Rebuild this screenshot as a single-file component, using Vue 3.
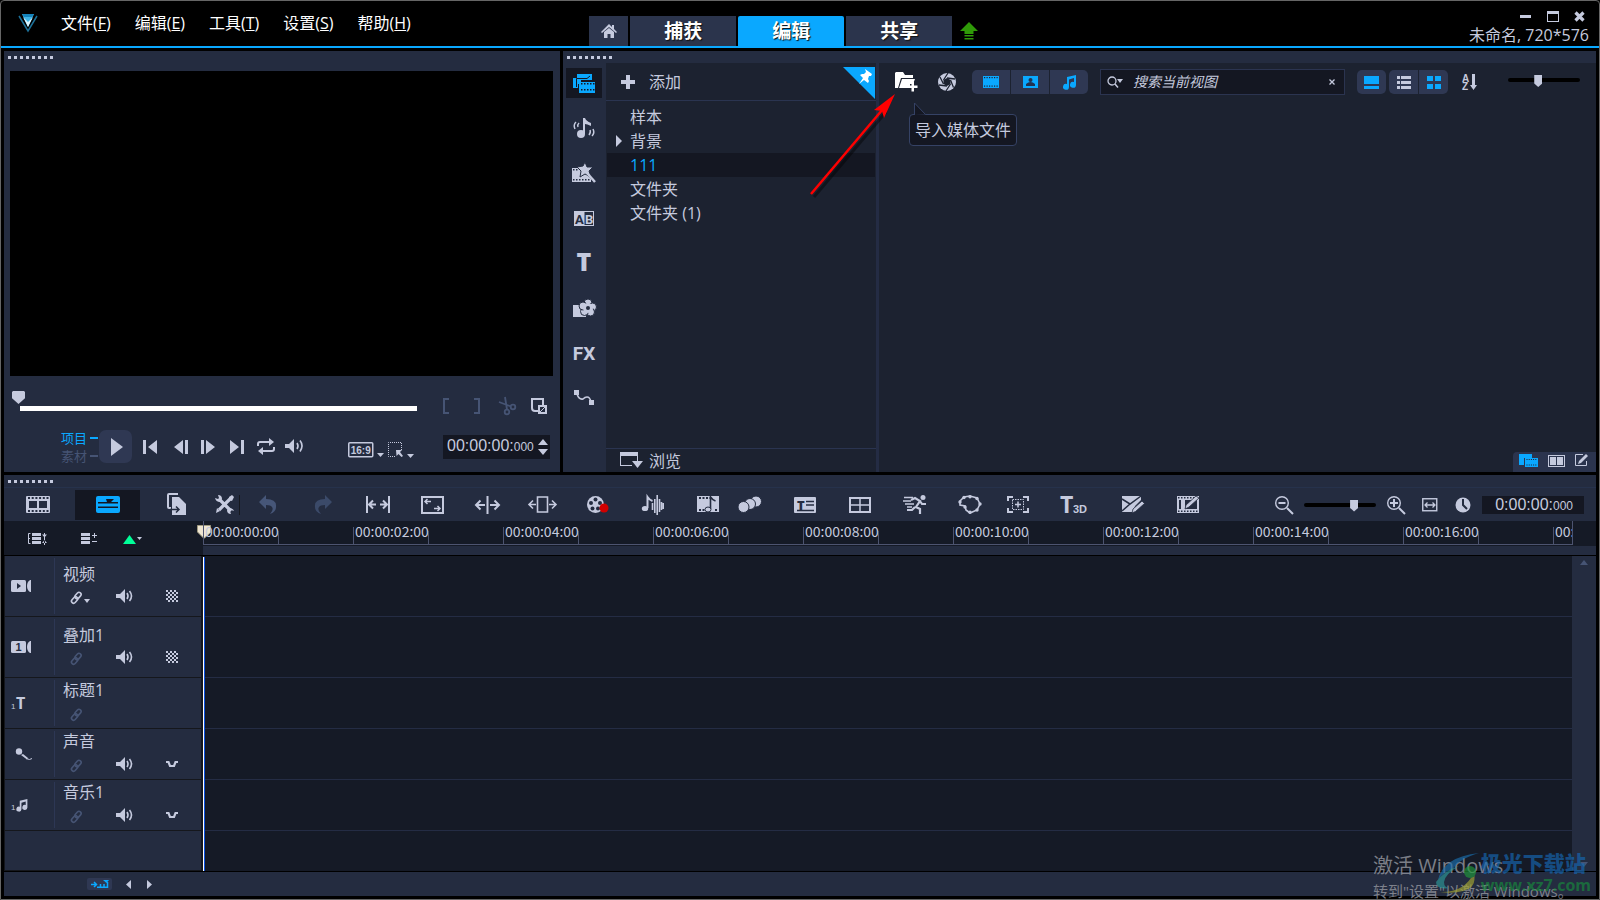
<script setup>
import { h, ref } from 'vue'

const L = '#c5cade'
const B = '#0aa8ff'
const D = '#465474'
const P = '#242c40'

const link = (c) => `<g fill="none" stroke="${c}" stroke-width="1.6"><rect x="-3.6" y="-2.1" width="7.2" height="4.2" rx="2.1" transform="translate(4.6 10) rotate(-48)"/><rect x="-3.6" y="-2.1" width="7.2" height="4.2" rx="2.1" transform="translate(8 5.6) rotate(-48)"/></g>`
const speaker = `<path fill="${L}" d="M0 5h4l5-5v14l-5-5H0z"/><path fill="none" stroke="${L}" stroke-width="1.6" d="M11 4q2 3 0 6M13.5 2q4 5 0 10"/>`
const dots = (x, y, n, step, c, s = 2) =>
  Array.from({ length: n }, (_, i) => `<rect x="${x + i * step}" y="${y}" width="${s}" height="${s}" fill="${c}"/>`).join('')
const checker = Array.from({ length: 36 }, (_, i) => {
  const r = Math.floor(i / 6)
  const c = i % 6
  return (r + c) % 2 ? '' : `<rect x="${c * 2}" y="${r * 2}" width="2" height="2" fill="${L}"/>`
}).join('')
const note = 'M5 2l9-2v10a3 3 0 1 1-2-3V3L7 4.500v7.500a3 3 0 1 1-2-3z'

const icons = {
  logo: [20, 20, `<path fill="none" stroke="#1b6f97" stroke-width="1.500" d="M1 3l9 15 9-15"/><path fill="#3fb4e6" d="M4 1h12l-6 13z"/><path fill="#d8f4ff" d="M5 4l5 5 5-5-5 10z"/><path fill="#1583bb" d="M4 1h12l-2 3H6z"/>`],
  home: [16, 14, `<path fill="${L}" d="M8 0l3 3V1h2v4l3 3-1 1-7-6-7 6-1-1z"/><path fill="${L}" d="M8 4l5 4v6h-3.500v-4h-3v4H3V8z"/>`],
  up: [18, 18, `<path fill="#2f9a08" d="M9 0l9 9h-4.500v3h-9V9H0zM4.500 13h9v1.500h-9zM4.500 16h9v1.500h-9z"/>`],
  min: [12, 12, `<rect y="4" width="11" height="3" fill="${L}"/>`],
  max: [12, 12, `<path fill="${L}" fill-rule="evenodd" d="M0 0h12v11H0zM1 3v7h10V3z"/>`],
  close: [12, 12, `<path stroke="${L}" stroke-width="3.200" d="M1.500 1.500l8 8m0-8l-8 8"/>`],
  media: [23, 19, `<path fill="${B}" d="M4 0h15v6H8v4H5v4H0V4h4z"/><path stroke="#141722" fill="none" d="M3.500 13V4.500H14L17 2"/><path fill="${B}" d="M6 8h16v11H6z"/>${dots(8, 9, 5, 3, '#141722', 1.500)}${dots(8, 15, 5, 3, '#141722', 1.500)}`],
  sound: [23, 20, `<circle cx="8" cy="16" r="4" fill="${L}"/><path fill="${L}" d="M10 0h2q1 3 6 5v3q-4-2-6-2v10h-2z"/><path fill="none" stroke="${L}" stroke-width="1.500" d="M3 4q-3 3-1 7M6 5q-2 2-1 4M17 12q1 2-1 5M20 11q2 4-1 7"/>`],
  magic: [24, 20, `<path fill="${L}" d="M0 5h8l2 5 5 2 4 4v3H0z"/>${dots(1, 6, 2, 3, P, 1.500)}${dots(1, 16, 6, 3, P, 1.500)}<path fill="${L}" stroke="${P}" d="M13-1l2 5 6 0-4 4 2 6-6-3-5 3 1-6-4-4 6-1z"/><path stroke="${L}" stroke-width="2.500" d="M15 10l8 9"/>`],
  ab: [20, 15, `<rect width="20" height="15" fill="${L}"/><rect x="10.500" y="1" width="8.500" height="13" fill="${P}"/><text x="1" y="12.500" font-family="Roboto" font-weight="700" font-size="13" fill="${P}">A</text><text x="11" y="12.500" font-family="Roboto" font-weight="700" font-size="13" fill="${L}">B</text>`],
  title: [20, 18, `<text x="10" y="17" text-anchor="middle" font-family="Open Sans" font-weight="800" font-size="25" fill="${L}">T</text>`],
  flower: [23, 18, `<path fill="${L}" d="M0 6h9l4 5v7H0z"/><g fill="${L}" stroke="${P}" stroke-width="1"><circle cx="15" cy="4" r="4"/><circle cx="19.500" cy="8" r="4"/><circle cx="17.500" cy="13" r="4"/><circle cx="11.500" cy="12.500" r="4"/><circle cx="10" cy="7" r="4"/></g><circle cx="15" cy="9" r="5" fill="${L}"/><circle cx="15" cy="9" r="2" fill="${P}"/>`],
  fx: [22, 16, `<text x="11" y="15" text-anchor="middle" font-family="Roboto" font-weight="700" font-size="19" fill="${L}">FX</text>`],
  path: [21, 16, `<path fill="${L}" d="M0 0h5v5H0zM15 10h5v5h-5z"/><path fill="none" stroke="${L}" stroke-width="1.600" d="M3 4q2 6 6 5 2-2 4-2 3 0 4 5"/>`],
  plus: [14, 14, `<path fill="${L}" d="M5 0h4v5h5v4H9v5H5V9H0V5h5z"/>`],
  pin: [32, 32, `<path fill="${B}" d="M0 0h32v32z"/><path fill="#fff" d="M22 2l7 5-1 2-2 0-1 3 1 2-1 2-4-3-5 4 4-6-3-3 2-1 2 0 2-2z"/>`],
  tri: [6, 12, `<path fill="${L}" d="M0 0l6 6-6 6z"/>`],
  browse: [24, 17, `<path fill="${L}" fill-rule="evenodd" d="M0 0h18v10h-1V4H1v9h11v1H0z"/><path fill="${L}" d="M12 9h11l-5.500 7z"/>`],
  folder: [23, 20, `<path fill="#fff" d="M1 0h7l2 3h8v3H6L3 16H0V1z"/><path fill="#fff" d="M7 7h13l-2 5h-3v4H4z"/><path fill="#fff" d="M16.500 10h2.500v3.500h3.500V16H19v3.500h-2.500V16H13v-2.500h3.500z"/>`],
  aperture: [20, 20, `<circle cx="10" cy="10" r="9" fill="${L}"/><path fill="#1c2230" d="M10 6l3.500 2v4L10 14l-3.500-2V8z"/><path stroke="#1c2230" stroke-width="1.300" d="M6.500 8L11 1M10 6l8 1M13.500 8l3 7.500M13.500 12L9 19M10 14l-8-1M6.500 12L3 5"/>`],
  clip: [16, 12, `<rect width="16" height="12" fill="${B}"/>${dots(1, 1, 6, 2.500, '#223', 1.200)}${dots(1, 9.500, 6, 2.500, '#223', 1.200)}`],
  photo: [15, 12, `<rect width="15" height="12" fill="${B}"/><circle cx="7.500" cy="4" r="2" fill="#223250"/><path fill="#223250" d="M3 10V8q4.500-4 9 0v2z"/>`],
  note: [14, 14, `<path fill="${B}" d="${note}"/>`],
  search: [17, 13, `<circle cx="5" cy="5" r="4" fill="none" stroke="${L}" stroke-width="1.300"/><path stroke="${L}" stroke-width="1.500" d="M8 8l3 3.500"/><path fill="${L}" d="M10 3h6l-3 4z"/>`],
  clear: [6, 6, `<path stroke="${L}" stroke-width="1.300" d="M.5.5l5 5m0-5l-5 5"/>`],
  large: [15, 13, `<path fill="${B}" d="M0 0h15v8H0zM0 10h15v3H0z"/>`],
  list: [14, 13, `<path fill="${L}" d="M0 0h3v3H0zM4 0h10v3H4zM0 5h3v3H0zM4 5h10v3H4zM0 10h3v3H0zM4 10h10v3H4z"/>`],
  grid: [14, 13, `<path fill="${B}" d="M0 0h6v5H0zM8 0h6v5H8zM0 8h6v5H0zM8 8h6v5H8z"/>`],
  sort: [15, 17, `<text x="0" y="8" font-family="Liberation Sans" font-size="10" font-weight="700" fill="${L}">A</text><text x="0" y="16" font-family="Liberation Sans" font-size="10" font-weight="700" fill="${L}">Z</text><path fill="${L}" d="M10 0h3v11h2l-3.500 5L8 11h2z"/>`],
  lib1: [19, 14, `<path fill="${B}" d="M0 0h13v4H5v7H0zM6 4h13v9H6z"/>${dots(7.500, 5, 5, 2.200, '#223', 1)}${dots(7.500, 10.500, 5, 2.200, '#223', 1)}`],
  lib2: [17, 12, `<rect x=".5" y=".5" width="16" height="11" fill="none" stroke="${L}"/><path fill="${L}" d="M2 2h6v8H2zM9 2h6v8H9z"/>`],
  lib3: [13, 13, `<path fill="none" stroke="${L}" d="M8 .5H.500v11h11V7"/><path fill="${L}" d="M3 10l1-3 7-7 2 2-7 7z"/>`],
  markIn: [6, 16, `<path fill="none" stroke="${D}" stroke-width="2" d="M6 1H1v14h5"/>`],
  markOut: [6, 16, `<path fill="none" stroke="${D}" stroke-width="2" d="M0 1h5v14H0"/>`],
  scissors: [18, 18, `<g fill="none" stroke="${D}" stroke-width="1.800"><circle cx="14" cy="10" r="2.300"/><circle cx="8" cy="15" r="2.300"/><path d="M6 0l2 12.500M0 5l12 4.500"/></g>`],
  split: [16, 16, `<path fill="none" stroke="${L}" stroke-width="2" d="M7 13H4q-3 0-3-3V1h11v6M8 8h7v7H8z"/><path fill="none" stroke="${L}" d="M9 14l5-5"/>`],
  play: [12, 18, `<path fill="${L}" d="M0 0l12 9-12 9z"/>`],
  first: [14, 14, `<path fill="${L}" d="M0 0h3v14H0zM14 0v14L5 7z"/>`],
  prev: [19, 14, `<path fill="${L}" d="M14 0v14L5 7zM16 0h3v14h-3z"/>`],
  next: [14, 14, `<path fill="${L}" d="M0 0h3v14H0zM5 0l9 7-9 7z"/>`],
  last: [15, 14, `<path fill="${L}" d="M1 0l9 7-9 7zM12 0h3v14h-3z"/>`],
  loop: [18, 15, `<path fill="none" stroke="${L}" stroke-width="2" d="M1 7V5q0-2 2-2h10M17 8v2q0 2-2 2H5"/><path fill="${L}" d="M12-1l5 4-5 4zM6 8l-5 4 5 4z"/>`],
  volume: [19, 15, `<path fill="${L}" d="M0 5h4l5-5v14l-5-5H0z"/><path fill="none" stroke="${L}" stroke-width="1.600" d="M12 4q2 3 0 6M15 1.500q4 5 0 11"/>`],
  ratio: [36, 16, `<rect x=".75" y=".75" width="24" height="14" rx="1" fill="none" stroke="${L}" stroke-width="1.500"/><text x="12.700" y="11.500" text-anchor="middle" font-family="Liberation Sans" font-weight="700" font-size="10" fill="${L}">16:9</text><path fill="${L}" d="M29 11h7l-3.500 4z"/>`],
  select: [26, 16, `<path fill="none" stroke="${L}" stroke-dasharray="1 1" d="M7 14.500H.500V.500h13V8"/><path fill="${L}" d="M8 8h6l-2 2 3 4-1.500 1-3-3-2 2zM19 12h7l-3.500 4z"/>`],
  spinUp: [10, 6, `<path fill="${L}" d="M5 0l5 6H0z"/>`],
  spinDown: [10, 6, `<path fill="${L}" d="M0 0h10L5 6z"/>`],
  story: [24, 17, `<rect width="24" height="17" rx="1" fill="${L}"/>${dots(2, 1, 6, 3.700, P)}${dots(2, 14, 6, 3.700, P)}<path fill="${P}" d="M3 5h8v7H3zM13 5h8v7h-8z"/>`],
  timeline: [24, 17, `<rect width="24" height="17" rx="2" fill="${B}"/><path fill="#141722" d="M2 6h9l-1-3h8l-3 3h7v1.500H2zM2 10.500h20V12H2z"/>`],
  copy: [20, 23, `<path fill="none" stroke="${L}" stroke-width="2" d="M4 15H2q-1 0-1-1V2q0-1 1-1h9"/><path fill="${L}" d="M5 4h7l7 7v11H5z"/><path fill="none" stroke="${P}" stroke-width="1.500" d="M3 16.500h8M9 13.500l3 3-3 3"/>`],
  tools: [20, 19, `<path stroke="${L}" stroke-width="3.200" d="M4 4l12 12M16 3L4 15"/><path fill="${L}" d="M0 3l3 1 1-1-1-3q4 0 4 4L5 7Q1 7 0 3zM19 16l-3-1-1 1 1 3q-4 0-4-4l2-2q4 0 5 3zM14 2l3-2 2 2-2 4-3-1zM1 18l1-5 3 3z"/>`],
  undo: [18, 19, `<path fill="#465678" d="M7 0v4q11 0 10 8 0 5-6 7 4-4 2-7-1-2-6-2v4L0 7z"/>`],
  redo: [18, 19, `<path fill="#3b4a69" d="M11 0v4Q0 4 1 12q0 5 6 7-4-4-2-7 1-2 6-2v4l7-7z"/>`],
  fit: [24, 17, `<path fill="none" stroke="${L}" stroke-width="2" d="M1 0v17M23 0v17M3 8.500h7M14 8.500h7M7 4.500l-4 4 4 4M17 4.500l4 4-4 4"/>`],
  resize: [24, 18, `<rect x="1" y="1" width="21" height="16" fill="none" stroke="${L}" stroke-width="2"/><path fill="none" stroke="${L}" stroke-width="1.500" d="M4 5.500h6M6.500 3L4 5.500 6.500 8M13 12.500h6M16.500 10l2.500 2.500-2.500 2.500"/>`],
  cut: [26, 18, `<path fill="none" stroke="${L}" stroke-width="2" d="M12.500 0v18M1 9h9M15 9h9M5.500 4.500L1 9l4.500 4.500M19.500 4.500L24 9l-4.500 4.500"/>`],
  stretch: [28, 18, `<path fill="none" stroke="${L}" stroke-width="1.600" d="M8.500 1h10v15h-10zM0 8.500h7M20 8.500h7M4 4.500l-4 4 4 4M23 4.500l4 4-4 4"/>`],
  reel: [22, 18, `<circle cx="8.500" cy="8.500" r="8.500" fill="${L}"/><g fill="${P}"><circle cx="8.500" cy="3.500" r="2"/><circle cx="13" cy="7" r="2"/><circle cx="4" cy="7" r="2"/><circle cx="5.500" cy="12.500" r="2"/><circle cx="11" cy="12.500" r="2"/></g><circle cx="17" cy="12" r="4.500" fill="#d00000"/>`],
  wave: [22, 20, `<ellipse cx="3" cy="13.500" rx="3.200" ry="2.600" fill="${L}"/><path fill="none" stroke="${L}" stroke-width="2" d="M5.500 13V2q2 3 5 4"/><path fill="none" stroke="${L}" stroke-width="1.600" d="M10.500 8v7M12.800 4v14M15.200 0v20M17.500 4v13M19.500 7v8M21.200 8v6"/>`],
  filmNote: [22, 17, `<rect width="22" height="16" fill="${L}"/>${dots(2, 1, 4, 3.500, P)}${dots(2, 13, 2, 3.500, P)}${dots(18, 13, 1, 3, P)}<path fill="none" stroke="${P}" stroke-width="1.600" d="M13.500 13V1q2 3 5 4"/><ellipse cx="11" cy="13.500" rx="3" ry="2.500" fill="${L}" stroke="${P}"/>`],
  circles: [24, 18, `<g fill="${L}" stroke="${P}"><circle cx="18" cy="5.500" r="5.500"/><circle cx="12" cy="8" r="5.500"/><circle cx="5.500" cy="11" r="5.500"/></g>`],
  subtitle: [22, 16, `<rect width="22" height="16" rx="1" fill="${L}"/><text x="3" y="13" font-family="Open Sans" font-weight="800" font-size="13" fill="${P}">T</text><path stroke="${P}" stroke-width="1.400" d="M12 4.500h8M12 8h8M3 13.500h17"/>`],
  panes: [22, 16, `<rect x="1" y="1" width="20" height="14" fill="none" stroke="${L}" stroke-width="2"/><path stroke="${L}" stroke-width="1.500" d="M11 1v14M1 8h20"/>`],
  run: [24, 19, `<circle cx="20" cy="2.500" r="2.500" fill="${L}"/><path fill="none" stroke="${L}" stroke-width="2.200" d="M8 5l4-2 5 3-4 6 4 2v5M12 12l-3 3H4M17 6l2 3h4"/><path stroke="${L}" stroke-width="1.500" d="M1 2.500h9M0 6h8M2 9h9M4 12h5"/>`],
  mask: [24, 19, `<path fill="none" stroke="${L}" stroke-width="1.600" d="M2 6L6 2 12 1l7 2 3 6-3 6-7 3-4-3-1-4-5-1z"/><g fill="${L}"><circle cx="2" cy="7" r="1.700"/><circle cx="6" cy="2.500" r="1.700"/><circle cx="12" cy="1.700" r="1.700"/><circle cx="19" cy="3.500" r="1.700"/><circle cx="22" cy="9" r="1.700"/><circle cx="19" cy="15" r="1.700"/><circle cx="12" cy="17.300" r="1.700"/><circle cx="7" cy="12" r="1.700"/></g>`],
  track: [22, 17, `<path fill="none" stroke="${L}" stroke-width="2" d="M6 1H1v4M16 1h5v4M6 16H1v-4M16 16h5v-4"/><rect x="5.500" y="3.500" width="11" height="10" fill="none" stroke="${L}" stroke-dasharray="1.500 1"/><path stroke="${L}" stroke-width="1.500" d="M8 8.500h6M11 5.500v6"/>`],
  t3d: [27, 18, `<text x="0" y="17" font-family="Open Sans" font-weight="700" font-size="23" fill="${L}">T</text><text x="13" y="17" font-family="Liberation Sans" font-size="11" font-weight="700" fill="${L}">3D</text>`],
  shot: [22, 17, `<path fill="${L}" d="M0 0h19v4l-6 6-2 6H0z"/><path fill="none" stroke="${P}" stroke-width="1.500" d="M0 3l8 5L19 0M8 8l-8 7"/><path fill="${L}" stroke="${P}" stroke-width=".8" d="M10 17l1-4 9-8 2.500 2.500-9 8z"/>`],
  filmEdit: [22, 17, `<path fill="${L}" fill-rule="evenodd" d="M0 0h22v17H0zM2 4v9h2V4zM8 4v9h12V4z"/>${dots(1, 1, 7, 3, P, 1.500)}${dots(1, 14.500, 7, 3, P, 1.500)}<path fill="${L}" stroke="${P}" stroke-width=".8" d="M8 13l1-4 10-9 3 2-10 9z"/>`],
  zoomOut: [18, 18, `<circle cx="7" cy="7" r="6.300" fill="none" stroke="${L}" stroke-width="1.400"/><path stroke="${L}" stroke-width="2" d="M3.500 7h7M12 12l6 6"/>`],
  zoomIn: [18, 18, `<circle cx="7" cy="7" r="6.300" fill="none" stroke="${L}" stroke-width="1.400"/><path stroke="${L}" stroke-width="2" d="M3 7h8M7 3v8M12 12l6 6"/>`],
  fitAll: [16, 14, `<rect x=".75" y=".75" width="14" height="12" fill="none" stroke="${L}" stroke-width="1.400"/><path fill="none" stroke="${L}" stroke-width="1.300" d="M3 7h10M5.500 4.500L3 7l2.500 2.500M10.500 4.500L13 7l-2.500 2.500"/>`],
  clock: [16, 16, `<circle cx="8" cy="8" r="7.500" fill="${L}"/><path fill="none" stroke="${P}" stroke-width="2" d="M8 2v6l4 4"/>`],
  layers: [20, 12, `<path fill="${L}" d="M4 0h9v3H4zM4 4h9v3H4zM4 8h9v3H4zM14 1.500h5l-2.500 3zM14 10h5l-2.500-3zM16 0h1v12h-1z"/><path fill="none" stroke="${L}" d="M2.500.500h-2v10h2M0 5.500h2"/>`],
  addTrack: [17, 12, `<path fill="${L}" d="M0 0h9v3H0zM0 4h9v3H0zM0 8h9v3H0zM11 2h5v1h-5zM13 0h1v5h-1zM11 8h5v1h-5z"/>`],
  marker: [20, 10, `<path fill="#0f9" d="M6.500 1l6.500 9H0z"/><path fill="${L}" d="M14 3h5l-2.500 3z"/>`],
  head: [14, 14, `<path fill="#efe6d2" stroke="#a09a80" d="M.5.5h13v7l-6 5.500-1 0-6-6z"/>`],
  video: [21, 13, `<rect width="15" height="12" rx="1.500" fill="${L}"/><path fill="${L}" d="M20 0v12h-1q-3-2-3-6t3-6z"/><path fill="${P}" d="M6 3l4 3-4 3z"/>`],
  overlay: [21, 13, `<rect width="15" height="12" rx="1.500" fill="${L}"/><path fill="${L}" d="M20 0v12h-1q-3-2-3-6t3-6z"/><text x="4.500" y="10" font-family="Liberation Sans" font-weight="700" font-size="11" fill="${P}">1</text>`],
  titleTrack: [17, 13, `<text x="0" y="12" font-family="Liberation Sans" font-size="8" fill="${L}">1</text><text x="5" y="12" font-family="Open Sans" font-weight="700" font-size="16" fill="${L}">T</text>`],
  voice: [21, 13, `<circle cx="8" cy="3.500" r="3.200" fill="${L}"/><path fill="${L}" d="M10 7l2-1 5 4-1 1.500z"/><path fill="none" stroke="${L}" d="M15 10.500q4 2 6 0"/>`],
  musicTrack: [17, 13, `<text x="0" y="11" font-family="Liberation Sans" font-size="8" fill="${L}">1</text><g transform="translate(4.500 0) scale(.85)"><path fill="${L}" d="${note}"/></g>`],
  linkOn: [21, 13, link(L) + `<path fill="${L}" d="M14 9h6l-3 4z"/>`],
  linkOff: [21, 13, link(D)],
  speaker: [17, 14, speaker],
  checker: [12, 12, checker],
  duck: [12, 12, `<path fill="none" stroke="${L}" stroke-width="2.200" d="M0 4h2.500l1.500 4h4l1.500-4H12"/>`],
  snap: [18, 8, `<path fill="none" stroke="${B}" stroke-width="1.500" d="M0 4.500h5M3 2l2.500 2.500L3 7M6 7.300h10.500V2M9.500 4v3M13 4v3"/><path fill="${B}" d="M12 0h6l-2.500 3z"/>`],
  left: [5, 9, `<path fill="${L}" d="M5 0v9L0 4.500z"/>`],
  right: [5, 9, `<path fill="${L}" d="M0 0v9l5-4.500z"/>`],
  scrollUp: [8, 5, `<path fill="#465474" d="M4 0l4 5H0z"/>`],
  scrollDown: [8, 5, `<path fill="#465474" d="M0 0h8L4 5z"/>`]
}

const Icon = (props) => {
  const [w, ht, body] = icons[props.name]
  return h('svg', { width: w, height: ht, viewBox: `0 0 ${w} ${ht}`, 'aria-hidden': 'true', innerHTML: body })
}
Icon.props = ['name']

const menus = [['文件', 'F'], ['编辑', 'E'], ['工具', 'T'], ['设置', 'S'], ['帮助', 'H']]
const tabs = ['捕获', '编辑', '共享']
const activeTab = ref('编辑')
const nav = [['media', '媒体'], ['sound', '声音'], ['magic', '即时项目'], ['ab', '转场'], ['title', '标题'], ['flower', '图形'], ['fx', '滤镜'], ['path', '路径']]
const folders = ['样本', '背景', '111', '文件夹', '文件夹 (1)']
const folder = ref('111')
const query = ref('')
const scrub = ref(0)
const thumbSize = ref(41)
const zoom = ref(72)
const transport = [['first', '起始'], ['prev', '上一帧'], ['next', '下一帧'], ['last', '结束'], ['loop', '重复'], ['volume', '系统音量']]
const trims = [['markIn', '开始标记'], ['markOut', '结束标记'], ['scissors', '分割'], ['split', '扩大']]
const tools = [
  ['undo', '撤消', 'near'], ['redo', '重复'], ['fit', '适合'], ['resize', '缩放'], ['cut', '滑动'], ['stretch', '伸展'],
  ['reel', '录制'], ['wave', '混音器'], ['filmNote', '自动音乐'], ['circles', '运动跟踪', 'near'], ['subtitle', '字幕'],
  ['panes', '多视图'], ['run', '时间重映射'], ['mask', '遮罩'], ['track', '摇动和缩放', 'mid'], ['t3d', '3D 标题'],
  ['shot', '分屏模板', 'far'], ['filmEdit', '绘图']
]
const times = ['00', '02', '04', '06', '08', '10', '12', '14', '16', '18']
const tracks = [
  { name: '视频', icon: 'video', link: 'linkOn', extras: ['speaker', 'checker'], tall: true },
  { name: '叠加1', icon: 'overlay', link: 'linkOff', extras: ['speaker', 'checker'], tall: true },
  { name: '标题1', icon: 'titleTrack', link: 'linkOff', extras: [] },
  { name: '声音', icon: 'voice', link: 'linkOff', extras: ['speaker', 'duck'] },
  { name: '音乐1', icon: 'musicTrack', link: 'linkOff', extras: ['speaker', 'duck'] }
]
</script>

<template>
  <div class="window">
    <header class="titlebar">
      <Icon name="logo" class="logo" />
      <nav class="menus">
        <button v-for="m in menus" :key="m[1]">{{ m[0] }}(<u>{{ m[1] }}</u>)</button>
      </nav>
      <div class="tabs">
        <button class="tab home" aria-label="主页"><Icon name="home" /></button>
        <button v-for="t in tabs" :key="t" class="tab" :class="{ on: t === activeTab }" @click="activeTab = t">{{ t }}</button>
        <button class="upgrade" aria-label="升级"><Icon name="up" /></button>
      </div>
      <div class="corner">
        <div class="winbtns">
          <button aria-label="最小化"><Icon name="min" /></button>
          <button aria-label="最大化"><Icon name="max" /></button>
          <button aria-label="关闭"><Icon name="close" /></button>
        </div>
        <span>未命名, 720*576</span>
      </div>
    </header>

    <main class="work">
      <section class="panel preview">
        <div class="grip wide"><i v-for="n in 8" :key="n"></i></div>
        <div class="screen"></div>
        <div class="trimrow">
          <input v-model="scrub" class="scrub" type="range" min="0" max="100" aria-label="播放位置">
          <button v-for="t in trims" :key="t[0]" :aria-label="t[1]"><Icon :name="t[0]" /></button>
        </div>
        <div class="playrow">
          <div class="modes">
            <button class="on">项目<i></i></button>
            <button>素材<i></i></button>
          </div>
          <button class="play" aria-label="播放"><Icon name="play" /></button>
          <button v-for="t in transport" :key="t[0]" class="tbtn" :aria-label="t[1]"><Icon :name="t[0]" /></button>
          <div class="options">
            <button aria-label="宽高比"><Icon name="ratio" /></button>
            <button aria-label="调整大小"><Icon name="select" /></button>
          </div>
          <div class="timecode">
            <span class="digits">00:00:00:<small>000</small></span>
            <span class="spin">
              <button aria-label="增加"><Icon name="spinUp" /></button>
              <button aria-label="减少"><Icon name="spinDown" /></button>
            </span>
          </div>
        </div>
      </section>

      <section class="panel media">
        <div class="grip"><i v-for="n in 8" :key="n"></i></div>
        <div class="mediabody">
          <nav class="rail">
            <button v-for="(n, i) in nav" :key="n[0]" :class="{ on: i === 0 }" :aria-label="n[1]"><Icon :name="n[0]" /></button>
          </nav>
          <aside class="tree">
            <button class="add"><Icon name="plus" />添加</button>
            <button class="pin" aria-label="固定"><Icon name="pin" /></button>
            <ul>
              <li v-for="f in folders" :key="f">
                <button :class="{ on: f === folder }" @click="folder = f">
                  <span class="twist"><Icon v-if="f === '背景'" name="tri" /></span>{{ f }}
                </button>
              </li>
            </ul>
            <button class="browse"><Icon name="browse" />浏览</button>
          </aside>
          <div class="gallery">
            <div class="bar">
              <div class="import">
                <button aria-label="导入媒体文件"><Icon name="folder" /></button>
                <div class="tip" role="tooltip">
                  导入媒体文件
                  <svg class="tail" width="14" height="13" viewBox="0 0 14 13"><path fill="#141722" stroke="#354265" d="M1.500 13V1l11 11.500" /></svg>
                </div>
                <svg class="pointer" width="100" height="112" viewBox="0 0 100 112">
                  <path stroke="#000" stroke-opacity=".4" stroke-width="3" d="M8 107L80 22" />
                  <path stroke="#f00" stroke-width="2.500" d="M5 104L77 19" />
                  <path fill="#f00" d="M89 4L68 20l8 1 2 7z" />
                </svg>
              </div>
              <button class="shutter" aria-label="捕获"><Icon name="aperture" /></button>
              <div class="seg first">
                <button aria-label="视频"><Icon name="clip" /></button>
                <button aria-label="照片"><Icon name="photo" /></button>
                <button aria-label="音频"><Icon name="note" /></button>
              </div>
              <div class="search">
                <Icon name="search" />
                <input v-model="query" type="text" placeholder="搜索当前视图" aria-label="搜索当前视图">
                <button aria-label="清除"><Icon name="clear" /></button>
              </div>
              <div class="seg view"><button aria-label="大视图"><Icon name="large" /></button></div>
              <div class="seg view">
                <button aria-label="列表"><Icon name="list" /></button>
                <button aria-label="缩略图"><Icon name="grid" /></button>
              </div>
              <button class="sort" aria-label="排序"><Icon name="sort" /></button>
              <input v-model="thumbSize" class="slider" type="range" aria-label="缩略图大小">
            </div>
            <div class="dock">
              <button aria-label="素材库"><Icon name="lib1" /></button>
              <button aria-label="双面板"><Icon name="lib2" /></button>
              <button aria-label="选项"><Icon name="lib3" /></button>
            </div>
          </div>
        </div>
      </section>

      <section class="panel timeline">
        <div class="grip"><i v-for="n in 8" :key="n"></i></div>
        <div class="toolbar">
          <button class="mid" aria-label="故事板视图"><Icon name="story" /></button>
          <button class="on" aria-label="时间轴视图"><Icon name="timeline" /></button>
          <button aria-label="复制"><Icon name="copy" /></button>
          <button class="mid" aria-label="工具"><Icon name="tools" /></button>
          <span class="sep"></span>
          <button v-for="t in tools" :key="t[0]" :class="t[2]" :aria-label="t[1]"><Icon :name="t[0]" /></button>
          <div class="zoomers">
            <button aria-label="缩小"><Icon name="zoomOut" /></button>
            <input v-model="zoom" class="slider" type="range" aria-label="缩放">
            <button aria-label="放大"><Icon name="zoomIn" /></button>
            <button class="fitall" aria-label="适合窗口"><Icon name="fitAll" /></button>
            <Icon name="clock" />
            <span class="total digits">0:00:00:<small>000</small></span>
          </div>
        </div>

        <div class="rulerrow">
          <div class="tracktools">
            <button aria-label="显示全部轨道"><Icon name="layers" /></button>
            <button aria-label="添加轨道"><Icon name="addTrack" /></button>
            <button aria-label="添加标记"><Icon name="marker" /></button>
          </div>
          <div class="rulerwrap">
            <div class="ruler">
              <div v-for="t in times" :key="t" class="tick">00:00:{{ t }}:00</div>
            </div>
            <Icon name="head" class="head" />
          </div>
        </div>

        <div class="lanes">
          <div class="rows">
            <div v-for="t in tracks" :key="t.name" class="row" :class="{ tall: t.tall }">
              <div class="trackhead">
                <div class="kind"><Icon :name="t.icon" /></div>
                <div class="info">
                  <span>{{ t.name }}</span>
                  <div class="ctl">
                    <button :aria-label="t.name + ' 链接'"><Icon :name="t.link" /></button>
                    <button v-for="e in t.extras" :key="e" :aria-label="t.name + ' ' + e"><Icon :name="e" /></button>
                  </div>
                </div>
              </div>
              <div class="lane"></div>
            </div>
            <div class="row rest"><div class="trackhead"></div><div class="lane"></div></div>
            <div class="playhead"></div>
          </div>
          <div class="scroll">
            <button aria-label="向上"><Icon name="scrollUp" /></button>
            <button aria-label="向下"><Icon name="scrollDown" /></button>
          </div>
        </div>

        <div class="foot">
          <button class="snap" aria-label="自动滚动"><Icon name="snap" /></button>
          <button aria-label="向左"><Icon name="left" /></button>
          <button aria-label="向右"><Icon name="right" /></button>
        </div>
      </section>
    </main>

    <div class="activate">
      <strong>激活 Windows</strong>
      <span>转到"设置"以激活 Windows。</span>
    </div>
    <div class="site">
      <svg width="46" height="42" viewBox="0 0 46 42">
        <path fill="#1a6fae" d="M3 28Q8 5 44 1 24 7 18 17 8 20 3 28z" />
        <path fill="#2c9a9a" d="M1 30Q10 18 24 14 10 22 9 30q0 6 6 6Q1 38 1 30z" />
        <path fill="#a6a832" d="M5 40q24 1 34-19 3 15-11 18-10 3-23 1z" />
        <circle cx="35" cy="20" r="6" fill="#1f9a3a" />
      </svg>
      <div><b>极光下载站</b><em>www.xz7.com</em></div>
    </div>
  </div>
</template>

<style>
html, body { margin: 0; background: #000; }
</style>

<style scoped>
.window {
  position: relative;
  box-sizing: border-box;
  height: 100vh;
  min-height: 700px;
  display: flex;
  flex-direction: column;
  overflow: hidden;
  background: #000;
  border: 1px solid #666;
  border-radius: 4px 4px 0 0;
  color: #c5cade;
  font: 16px/20px "Open Sans", "Noto Sans CJK SC", sans-serif;
}
.window * { box-sizing: border-box; }
svg { display: block; flex: none; overflow: visible; }
button {
  display: flex;
  align-items: center;
  justify-content: center;
  flex: none;
  margin: 0;
  padding: 0;
  border: 0;
  background: none;
  color: inherit;
  font: inherit;
  white-space: nowrap;
}

.titlebar {
  position: relative;
  display: flex;
  justify-content: space-between;
  height: 47px;
  border-bottom: 2px solid #0aa8ff;
}
.logo { margin: 12px 0 0 17px; }
.menus { display: flex; gap: 24px; height: 44px; margin-left: 23px; margin-right: auto; color: #fff; }
.tabs {
  position: absolute;
  left: 37%;
  bottom: 0;
  display: flex;
  gap: 2px;
  height: 30px;
  margin-left: -3px;
}
.tab { width: 106px; background: #2b344c; color: #fff; font-size: 19px; font-weight: 700; text-shadow: 1px 1px 1px #111; }
.tab.home { width: 39px; }
.tab.on { background: #0aa8ff; border-radius: 2px 2px 0 0; }
.upgrade { width: 30px; }
.corner { display: flex; flex-direction: column; align-items: flex-end; padding: 10px 10px 0 0; }
.corner span { line-height: 24px; }
.winbtns { display: flex; gap: 15px; height: 12px; margin-right: 3px; }

.work {
  flex: 1;
  min-height: 0;
  display: grid;
  grid-template: minmax(0, 1fr) minmax(0, 1fr) / minmax(0, 556fr) minmax(0, 1033fr);
  gap: 3px;
  padding: 3px;
}
.panel { display: flex; flex-direction: column; min-width: 0; background: #242c40; }
.grip { display: flex; gap: 3px; flex: none; height: 12px; padding: 5px 4px 0; }
.grip.wide { height: 20px; }
.grip i { width: 3px; height: 3px; background: #c5cade; }

.screen { flex: 1; margin: 0 7px 0 6px; background: #000; }
.trimrow { display: flex; align-items: flex-end; height: 24px; margin: 15px 6px 0 8px; }
.trimrow button { width: 31px; height: 18px; }
.scrub { flex: 1; min-width: 0; height: 20px; margin: 0 13px 4px 0; appearance: none; background: none; }
.scrub::-webkit-slider-runnable-track { height: 5px; margin-top: 15px; background: linear-gradient(to right, transparent 8px, #fff 8px); }
.scrub::-webkit-slider-thumb {
  appearance: none;
  width: 13px;
  height: 13px;
  margin-top: -15px;
  background: #c5cade;
  clip-path: polygon(8% 0, 92% 0, 100% 8%, 100% 55%, 50% 100%, 0 55%, 0 8%);
}
.playrow { display: flex; align-items: center; height: 33px; margin: 15px 10px 9px 57px; }
.modes { font-size: 13px; line-height: 18px; color: #465474; }
.modes button { gap: 3px; }
.modes i { width: 8px; height: 2px; background: currentColor; }
.modes .on { color: #0aa8ff; }
.play { width: 33px; height: 33px; margin: 0 3px 0 1px; padding-left: 2px; border-radius: 7px; background: #2f3853; }
.tbtn { width: 29px; height: 24px; }
.options { display: flex; align-self: flex-end; gap: 4px; margin: 0 29px 5px auto; }
.timecode { display: flex; align-items: center; justify-content: space-between; width: 107px; height: 24px; padding: 0 2px 0 4px; background: #141722; }
.digits { font: 16px/20px "Liberation Sans", sans-serif; white-space: nowrap; }
.digits small { font-size: 12px; }
.spin { display: flex; flex-direction: column; gap: 4px; }

.mediabody { flex: 1; min-height: 0; display: flex; }
.rail { flex: none; display: flex; flex-direction: column; align-items: flex-start; gap: 15px; width: 43px; padding: 5px 3px; }
.rail button { width: 36px; height: 30px; }
.rail .on { background: #141722; }
.tree { position: relative; flex: none; display: flex; flex-direction: column; width: 273px; border-right: 3px solid #242c44; background: #1c2230; }
.add, .browse { justify-content: flex-start; }
.add { gap: 14px; height: 38px; padding-left: 15px; border-bottom: 1px solid #2a3450; }
.pin { position: absolute; right: 1px; top: 4px; }
.tree ul { flex: 1; margin: 0; padding: 4px 1px; list-style: none; }
.tree li button { justify-content: flex-start; width: 100%; height: 24px; }
.tree li .on { background: #141722; color: #0aa8ff; }
.twist { width: 14px; margin-left: 9px; }
.browse { gap: 5px; height: 24px; padding-left: 14px; border-top: 1px solid #2a3450; }
.gallery { flex: 1; min-width: 0; display: flex; flex-direction: column; justify-content: space-between; background: #1c2230; }
.bar { display: flex; align-items: center; height: 26px; margin: 6px 16px 0; }
.import { position: relative; }
.shutter { margin: 0 15px 0 19px; }
.seg { display: flex; flex: none; gap: 1px; height: 24px; }
.seg button { width: 38px; height: 24px; background: #2f3853; }
.seg.view button { width: 29px; }
.seg button:first-child { border-radius: 5px 0 0 5px; }
.seg button:last-child { border-radius: 0 5px 5px 0; }
.seg button:only-child { border-radius: 5px; }
.seg.view + .seg.view { margin-left: 3px; }
.search { flex: 1; min-width: 0; display: flex; align-items: center; height: 26px; margin: 0 12px; padding: 0 9px 0 6px; border: 1px solid #2b3450; background: #141722; }
.search input { flex: 1; min-width: 0; margin-left: 9px; padding: 0; border: 0; outline: 0; background: none; color: #c5cade; font: italic 14px/20px "Open Sans", "Noto Sans CJK SC", sans-serif; }
.search input::placeholder { color: #c5cade; opacity: 1; }
.sort { margin: 0 31px 0 14px; }
.slider { flex: none; width: 72px; height: 12px; margin: 0; appearance: none; background: none; }
.bar .slider { align-self: flex-start; margin-top: 5px; }
.slider::-webkit-slider-runnable-track { height: 4px; border-radius: 2px; background: #000; }
.slider::-webkit-slider-thumb {
  appearance: none;
  width: 8px;
  height: 12px;
  margin-top: -3px;
  background: #c5cade;
  clip-path: polygon(0 0, 100% 0, 100% 70%, 50% 100%, 0 70%);
}
.tip {
  position: absolute;
  left: 14px;
  top: 42px;
  z-index: 2;
  padding: 5px;
  border: 1px solid #354265;
  border-radius: 4px;
  background: #141722;
  white-space: nowrap;
}
.tail { position: absolute; left: 3px; top: -13px; }
.pointer { position: absolute; left: -89px; top: 18px; z-index: 2; fill: none; }
.dock { align-self: flex-end; display: flex; justify-content: space-between; width: 83px; height: 20px; padding: 0 8px 3px 6px; border-radius: 4px 0 0 0; background: #2b344e; }

.timeline { grid-column: 1 / -1; }
.toolbar { display: flex; align-items: center; flex: none; height: 34px; border-top: 1px solid #26324c; }
.toolbar > button { width: 28px; height: 30px; margin-left: 27px; }
.toolbar > .on { width: 65px; margin-left: 23px; background: #141722; }
.toolbar > .on + button { margin-left: 23px; }
.toolbar > .near { margin-left: 14px; }
.toolbar > .mid { margin-left: 20px; }
.toolbar > .far { margin-left: 32px; }
.sep { width: 1px; height: 20px; background: #15181f; }
.zoomers { display: flex; align-items: center; gap: 11px; margin: 0 12px 0 auto; }
.fitall { width: 28px; }
.total { width: 102px; height: 18px; padding-right: 11px; background: #141722; text-align: right; line-height: 18px; }

.rulerrow { display: flex; flex: none; height: 34px; background: #151a26; }
.tracktools { display: flex; align-items: center; flex: none; width: 199px; padding: 2px 0 0 24px; }
.tracktools button + button { margin-left: 33px; }
.tracktools button:last-child { margin-left: 25px; }
.rulerwrap { position: relative; flex: 1; min-width: 0; border-bottom: 9px solid #242c40; }
.ruler { display: flex; height: 24px; margin-right: 23px; overflow: hidden; border: solid #4d5470; border-width: 0 1px 1px; }
.tick { position: relative; flex: none; width: 150px; padding-left: 1px; font: 14px/20px "Noto Sans CJK SC", sans-serif; }
.tick::before, .tick::after { content: ""; position: absolute; bottom: 0; left: -1px; width: 1px; height: 17px; background: #4d5470; }
.tick::after { left: 74px; height: 13px; }
.head { position: absolute; left: -6px; top: 4px; z-index: -1; }
.rulerwrap { z-index: 0; }

.lanes { flex: 1; min-height: 0; display: flex; border-top: 1px solid #000; border-bottom: 1px solid #000; }
.rows { position: relative; flex: 1; min-width: 0; display: flex; flex-direction: column; background: #151a26; }
.row { display: flex; flex: none; height: 51px; }
.row.tall { height: 61px; }
.row.rest { flex: 1; min-height: 0; }
.trackhead { display: flex; flex: none; width: 199px; border: solid #15171c; border-width: 0 2px 1px 1px; background: #242c40; }
.lane { flex: 1; border-bottom: 1px solid #242c44; }
.rest .lane { border: 0; }
.kind { display: flex; align-items: center; width: 50px; margin: 2px 0; padding-left: 6px; border-right: 1px solid #2d3754; }
.info { display: flex; flex-direction: column; gap: 5px; padding: 2px 0 0 8px; }
.tall .info { gap: 4px; padding-top: 8px; }
.ctl { display: grid; grid-template-columns: 46px 50px 20px; align-items: center; height: 16px; padding-left: 7px; }
.ctl button { justify-content: flex-start; }
.playhead { position: absolute; left: 199px; top: 1px; bottom: 0; width: 2px; background: #fff; border-right: 1px solid #0a50e0; }
.scroll { flex: none; display: flex; flex-direction: column; justify-content: space-between; width: 24px; padding: 4px 0; background: #242c40; }
.foot { display: flex; align-items: center; flex: none; gap: 16px; height: 24px; padding-left: 83px; }
.snap { width: 25px; height: 12px; margin-right: -2px; border-radius: 2px; background: #2f3853; }

.activate { position: absolute; right: 20px; bottom: -4px; width: 206px; color: #8d9099; opacity: .85; pointer-events: none; white-space: nowrap; }
.activate strong, .activate span { display: block; font-weight: 400; }
.activate strong { font-size: 20px; line-height: 26px; }
.activate span { font-size: 15px; line-height: 24px; }
.site { position: absolute; right: 8px; bottom: 3px; display: flex; opacity: .65; pointer-events: none; font-weight: 700; }
.site b, .site em { display: block; font-style: normal; line-height: 22px; }
.site b { color: #1668b4; font-size: 21px; }
.site em { color: #178a3c; font-size: 16px; }
</style>
